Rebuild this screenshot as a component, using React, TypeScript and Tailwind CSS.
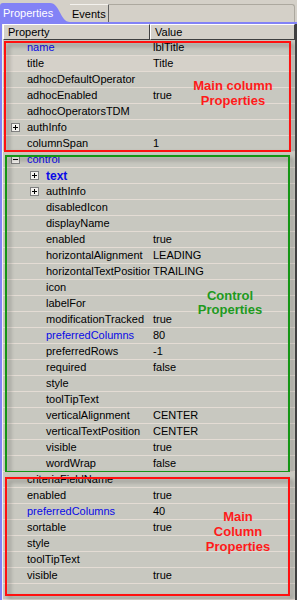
import React from "react";

type Row = {
  name: string;
  value?: string;
  level?: 0 | 1;
  toggle?: "+" | "-";
  blue?: boolean;
  bold?: boolean;
  light?: boolean;
};

const mainTop: Row[] = [
  { name: "name", value: "lblTitle", blue: true },
  { name: "title", value: "Title", light: true },
  { name: "adhocDefaultOperator" },
  { name: "adhocEnabled", value: "true" },
  { name: "adhocOperatorsTDM" },
  { name: "authInfo", toggle: "+" },
  { name: "columnSpan", value: "1" },
];

const controlRows: Row[] = [
  { name: "control", toggle: "-", blue: true },
  { name: "text", level: 1, toggle: "+", blue: true, bold: true },
  { name: "authInfo", level: 1, toggle: "+" },
  { name: "disabledIcon", level: 1 },
  { name: "displayName", level: 1 },
  { name: "enabled", level: 1, value: "true" },
  { name: "horizontalAlignment", level: 1, value: "LEADING" },
  { name: "horizontalTextPosition", level: 1, value: "TRAILING" },
  { name: "icon", level: 1 },
  { name: "labelFor", level: 1 },
  { name: "modificationTracked", level: 1, value: "true" },
  { name: "preferredColumns", level: 1, value: "80", blue: true },
  { name: "preferredRows", level: 1, value: "-1" },
  { name: "required", level: 1, value: "false" },
  { name: "style", level: 1 },
  { name: "toolTipText", level: 1 },
  { name: "verticalAlignment", level: 1, value: "CENTER" },
  { name: "verticalTextPosition", level: 1, value: "CENTER" },
  { name: "visible", level: 1, value: "true" },
  { name: "wordWrap", level: 1, value: "false" },
];

const mainBottom: Row[] = [
  { name: "criteriaFieldName" },
  { name: "enabled", value: "true" },
  { name: "preferredColumns", value: "40", blue: true },
  { name: "sortable", value: "true" },
  { name: "style" },
  { name: "toolTipText" },
  { name: "visible", value: "true" },
  { name: "" },
];

function Toggle({ sign }: { sign: "+" | "-" }) {
  return (
    <svg width="9" height="9" viewBox="0 0 9 9" className="shrink-0">
      <rect x="0.5" y="0.5" width="8" height="8" fill="#f4f2ee" stroke="#808080" />
      <path d="M2 4.5h5" stroke="#000" />
      {sign === "+" && <path d="M4.5 2v5" stroke="#000" />}
    </svg>
  );
}

function PropRow({ row }: { row: Row }) {
  const nested = row.level === 1;
  return (
    <div
      className={`flex h-[16px] border-b border-[#e4dcd4] ${
        row.light ? "bg-[#d5d1c9]" : "bg-[#c8c8c0]"
      }`}>
      <div className="flex w-[147px] shrink-0 items-center overflow-hidden whitespace-nowrap">
        <div
          className={`flex shrink-0 items-center ${
            nested ? "w-[43px] pl-[27px]" : "w-[24px] pl-[8px]"
          }`}>
          {row.toggle && <Toggle sign={row.toggle} />}
        </div>
        <span
          className={`${row.blue ? "text-[#0a0ae6]" : "text-black"} ${
            row.bold ? "font-bold text-[12px]" : ""
          }`}>
          {row.name}
        </span>
      </div>
      <div className="flex flex-1 items-center overflow-hidden whitespace-nowrap pl-[3px] text-black">
        {row.value}
      </div>
    </div>
  );
}

function Group({
  rows,
  box,
  label,
}: {
  rows: Row[];
  box: string;
  label: React.ReactNode;
}) {
  return (
    <div className="relative">
      {rows.map((row, i) => (
        <PropRow key={row.name + i} row={row} />
      ))}
      <div
        className={`pointer-events-none absolute border-2 drop-shadow-[3px_3px_2px_rgba(0,0,0,0.35)] ${box}`}></div>
      {label}
    </div>
  );
}

export default function App() {
  return (
    <div className="flex h-[600px] w-[297px] flex-col overflow-hidden bg-[#d4d0c8] font-['Liberation_Sans',Arial,sans-serif] text-[11px]">
      {/* tabs */}
      <div className="flex h-[22px] shrink-0 items-end">
        <div className="relative h-[19px] w-[70px] shrink-0">
          <svg
            className="absolute inset-0"
            width="70"
            height="19"
            viewBox="0 0 70 19">
            <path
              d="M0 19V3Q0 0 3 0H50C60 0 60 19 70 19Z"
              fill="#8282f6"
            />
          </svg>
          <span className="relative block pl-[3px] leading-[20px] text-white">
            Properties
          </span>
        </div>
        <div className="h-[18px] w-[39px] shrink-0 border-t border-r border-t-[#f4f2ee] border-r-[#606060] pl-[2px] leading-[18px] text-black">
          Events
        </div>
        <div className="h-[18px] flex-1 rounded-tr-[3px] border-t border-r border-[#aca89f] mr-[2px]"></div>
      </div>
      <div className="h-[2px] shrink-0 bg-[#8282f6]"></div>

      <div className="flex min-h-0 flex-1">
        <div className="w-[2px] shrink-0 bg-[#8282f6]"></div>
        <div className="w-[1px] shrink-0 bg-[#f4f2ee]"></div>
        <div className="min-w-0 flex-1 overflow-hidden">
          {/* header */}
          <div className="flex h-[16px]">
            <div className="w-[147px] shrink-0 border border-t-white border-l-white border-b-[#404040] border-r-[#404040] pl-[4px] leading-[14px] text-black">
              Property
            </div>
            <div className="flex-1 border border-t-white border-l-white border-b-[#404040] border-r-[#404040] pl-[4px] leading-[14px] text-black">
              Value
            </div>
          </div>

          <Group
            rows={mainTop}
            box="left-[1px] right-[4px] top-[1px] bottom-0 border-[#ff1010]"
            label={
              <div className="pointer-events-none absolute left-[180px] top-[38px] w-[100px] text-center text-[13px] font-bold leading-[15px] text-[#ff1a1a]">
                Main column
                <br />
                Properties
              </div>
            }
          />
          <Group
            rows={controlRows}
            box="left-[2px] right-[5px] top-[3px] -bottom-[1px] border-[#159515]"
            label={
              <div className="pointer-events-none absolute left-[177px] top-[137px] w-[100px] text-center text-[13px] font-bold leading-[14px] text-[#1e9a1e]">
                Control
                <br />
                Properties
              </div>
            }
          />
          <Group
            rows={mainBottom}
            box="left-[2px] right-[5px] top-[5px] bottom-[4px] border-[#ff1010]"
            label={
              <div className="pointer-events-none absolute left-[185px] top-[37px] w-[100px] text-center text-[13px] font-bold leading-[15px] text-[#ff1a1a]">
                Main
                <br />
                Column
                <br />
                Properties
              </div>
            }
          />
        </div>
        <div className="w-[2px] shrink-0 bg-[#404040]"></div>
      </div>
    </div>
  );
}
